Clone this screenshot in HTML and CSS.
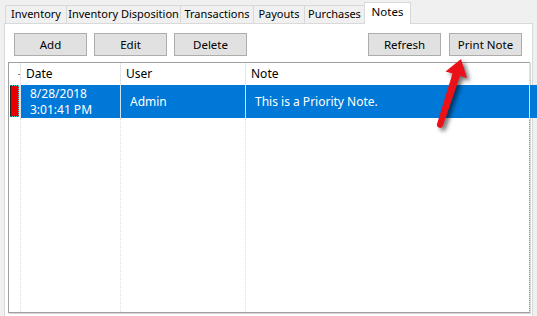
FILE: index.html
```html
<!DOCTYPE html>
<html lang="en">
<head>
    <meta charset="UTF-8">
    <title>Notes</title>
    <link rel="stylesheet" href="styles.css">
</head>
<body>
<div class="tabs">
    <div class="tab">Inventory</div>
    <div class="tab">Inventory Disposition</div>
    <div class="tab">Transactions</div>
    <div class="tab">Payouts</div>
    <div class="tab">Purchases</div>
    <div class="tab active">Notes</div>
</div>
<div class="panel">
    <div class="toolbar">
        <button class="btn">Add</button>
        <button class="btn">Edit</button>
        <button class="btn">Delete</button>
        <button class="btn push">Refresh</button>
        <button class="btn">Print Note</button>
    </div>
    <div class="grid">
        <div class="row head">
            <div class="cell corner"><span class="sort"></span></div>
            <div class="cell">Date</div>
            <div class="cell">User</div>
            <div class="cell">Note</div>
            <div class="cell end"></div>
        </div>
        <div class="row selected">
            <div class="cell marker"><span class="flag"></span></div>
            <div class="cell">8/28/2018<br>3:01:41 PM</div>
            <div class="cell">Admin</div>
            <div class="cell">This is a Priority Note.</div>
            <div class="cell end"></div>
        </div>
        <div class="row filler">
            <div class="cell"></div>
            <div class="cell"></div>
            <div class="cell"></div>
            <div class="cell"></div>
            <div class="cell end"></div>
        </div>
    </div>
</div>
<svg class="arrow" width="537" height="316" viewBox="0 0 537 316">
    <path d="M461 59 L467 78 L460 76 L443 125.5 A3 3 0 0 1 437 124 L452.5 73.5 L445.5 71.5 Z" fill="#ea1218"/>
</svg>
</body>
</html>
```

FILE: styles.css
```css
body {
    margin: 0;
    height: 316px;
    overflow: hidden;
    background-color: #f0f0f0;
    font-family: 'Noto Sans', 'Liberation Sans', sans-serif;
    font-size: 11.5px;
    color: #000;
}

.tabs {
    display: grid;
    grid-template-columns: 61px 114px 73px 51px 60px 46px;
    align-items: end;
    height: 23px;
    padding-left: 5px;
    font-size: 11px;
}

.tab {
    height: 18px;
    box-sizing: border-box;
    border: 1px solid #d9d9d9;
    border-bottom: none;
    margin-right: -1px;
    line-height: 16px;
    text-align: center;
    white-space: nowrap;
    background-color: #f0f0f0;
}

.tab.active {
    position: relative;
    z-index: 1;
    height: 22px;
    margin-bottom: -1px;
    line-height: 17px;
    font-size: 11.5px;
    background-color: #fff;
}

.panel {
    height: 296px;
    box-sizing: border-box;
    margin: 0 4px;
    padding: 9px 2px 0 3px;
    border: 1px solid #d9d9d9;
    background-color: #fff;
}

.toolbar {
    display: flex;
    gap: 7px;
    margin: 0 8px 6px 6px;
}

.btn {
    width: 73px;
    height: 23px;
    padding: 0;
    border: 1px solid #adadad;
    background-color: #e1e1e1;
    font: inherit;
    color: #000;
}

.btn.push {
    margin-left: auto;
    margin-right: 1px;
}

.grid {
    display: flex;
    flex-direction: column;
    height: 251px;
    box-sizing: border-box;
    border: 1px solid #a0a0a0;
    box-shadow: 1px 1px 0 #d4d4d4;
}

.row {
    display: grid;
    grid-template-columns: 12px 100px 125px 284px 1fr;
}

.cell {
    box-sizing: border-box;
    border-right: 1px solid #e5e5e5;
    padding-left: 5px;
    white-space: nowrap;
}

.cell.end {
    border-right: none;
    padding: 0;
}

.head {
    height: 22px;
    line-height: 21px;
    font-size: 12px;
}

.corner {
    position: relative;
    padding: 0;
}

.sort {
    position: absolute;
    left: 9px;
    top: 11px;
    width: 2px;
    height: 1px;
    background-color: #808080;
}

.selected {
    height: 33px;
    font-size: 12px;
    color: #fff;
}

.selected .cell {
    display: flex;
    align-items: center;
    padding-left: 9px;
    line-height: 16px;
    background-color: #0078d7;
    border-right-color: #cfe4f7;
}

.selected .cell.marker {
    padding: 0 1px 1px 1px;
    background-color: #fff;
    border-right-color: #e5e5e5;
}

.flag {
    display: block;
    width: 100%;
    height: 100%;
    box-sizing: border-box;
    background-color: #e80000;
    border: 1px dotted #38d8e0;
    border-left: 1px solid #202020;
}

.selected .cell.end {
    background-color: #0078d7;
}

.filler {
    flex: 1;
}

.filler .cell {
    border-right: 1px dotted #dedede;
}

.filler .cell.end {
    border-right: none;
}

.arrow {
    position: absolute;
    left: 0;
    top: 0;
    pointer-events: none;
    filter: drop-shadow(3px 3px 2px rgba(0, 0, 0, 0.55));
}
```
